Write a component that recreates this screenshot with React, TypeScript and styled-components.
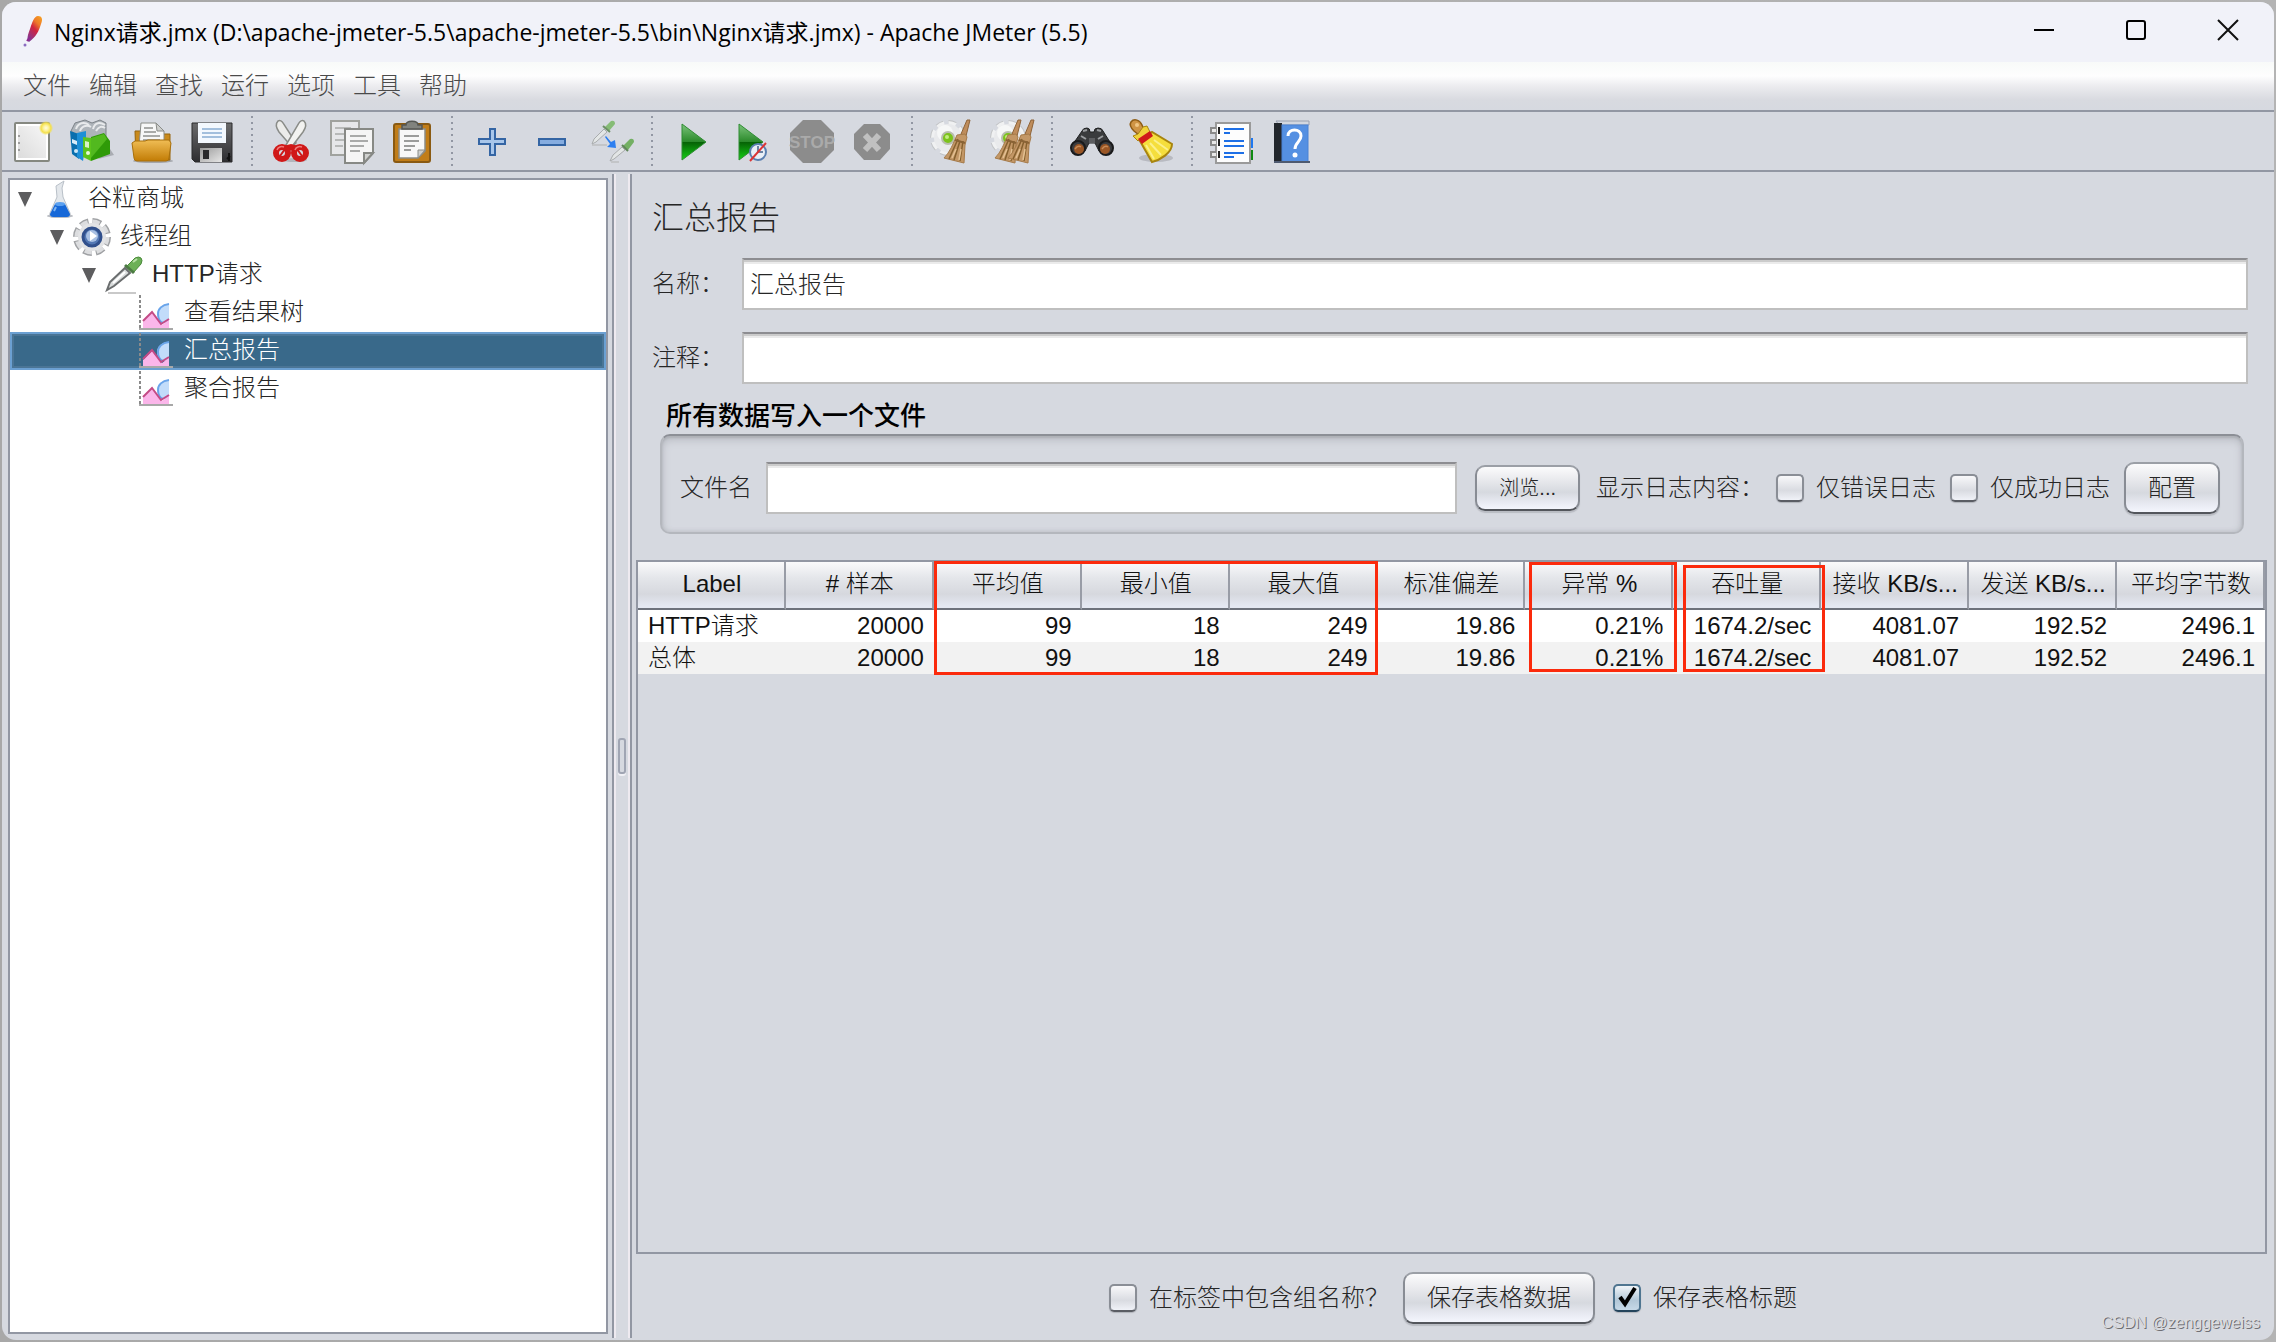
import React, { useId, useState } from "react";
import styled, { createGlobalStyle, css } from "styled-components";

const C = {
  panel: "#d6d9e0",
  line: "#9297a3",
  dark: "#6d727c",
  text: "#262626",
};

const UI = `"Liberation Sans", "Noto Sans CJK SC", sans-serif`;

const Global = createGlobalStyle`
  *, *::before, *::after { box-sizing: border-box; }
  html, body, #root { height: 100%; }
  body { margin: 0; background: #acacac; }
  button, input { font: inherit; color: inherit; margin: 0; }
  svg { display: block; overflow: visible; }
`;

const Desktop = styled.div`
  height: 100%;
  padding: 2px;
  background: linear-gradient(90deg, #a8a8a8, #b4b4b4);
  font-family: ${UI};
  font-size: 24px;
  font-weight: 300;
  line-height: 32px;
  color: ${C.text};
`;

const Window = styled.div`
  position: relative;
  height: 100%;
  display: flex;
  flex-direction: column;
  overflow: hidden;
  border-radius: 14px;
  background: ${C.panel};
`;

/* ---------- title bar ---------- */

const TitleBar = styled.header`
  flex: none;
  height: 60px;
  display: flex;
  align-items: center;
  padding: 0 0 0 16px;
  background: #f1f2f9;
`;

const TitleText = styled.h1`
  flex: 1;
  margin: 0 0 0 8px;
  font-family: "Open Sans", "Noto Sans CJK SC", sans-serif;
  font-size: 23px;
  font-weight: 400;
  color: #000;
  white-space: nowrap;
`;

const WindowButton = styled.button`
  width: 92px;
  height: 60px;
  padding: 0 0 4px;
  display: grid;
  place-items: center;
  border: 0;
  background: none;
`;

/* ---------- menu ---------- */

const MenuBar = styled.nav`
  flex: none;
  height: 50px;
  display: flex;
  align-items: center;
  padding: 0 12px;
  border-bottom: 2px solid ${C.line};
  background: linear-gradient(#f8faf9 0, #fefefe 14px, #ececef 24px, #d8dae0 38px, ${C.panel} 48px);
`;

const MenuItem = styled.button`
  padding: 0 9px;
  border: 0;
  background: none;
  color: #4a4a4a;
`;

/* ---------- toolbar ---------- */

const ToolBar = styled.div`
  flex: none;
  height: 60px;
  display: flex;
  align-items: center;
  border-bottom: 2px solid ${C.line};
`;

const ToolButton = styled.button`
  width: 60px;
  height: 58px;
  padding: 0;
  display: grid;
  place-items: center;
  border: 0;
  background: none;
`;

const ToolSeparator = styled.span`
  width: 20px;
  height: 50px;
  background: repeating-linear-gradient(${C.line} 0 2px, transparent 2px 6px) center / 2px 100% no-repeat;
`;

/* ---------- body ---------- */

const Body = styled.div`
  flex: 1;
  min-height: 0;
  display: flex;
`;

const TreePane = styled.aside`
  flex: 0 0 610px;
  padding: 6px 4px 6px 6px;
  display: flex;
`;

const Tree = styled.ul`
  flex: 1;
  margin: 0;
  padding: 0;
  list-style: none;
  border: 2px solid ${C.line};
  background: #fff;
`;

const TreeRow = styled.li<{ $level: number; $selected?: boolean }>`
  height: 38px;
  display: flex;
  align-items: center;
  padding-left: ${(p) => 4 + p.$level * 32}px;
  ${(p) =>
    p.$selected &&
    css`
      background: #39698a;
      color: #fff;
      box-shadow: inset 0 0 0 2px #6ba0d2, inset 0 0 0 4px #4a7596;
    `}
`;

const Twisty = styled.span`
  width: 22px;
  display: grid;
  place-items: center;
`;

const TreeIcon = styled.span`
  width: 48px;
  height: 38px;
  display: grid;
  place-items: center;
`;

const TreeLabel = styled.span`
  padding: 0 0 2px 4px;
`;

const Divider = styled.div`
  flex: 0 0 20px;
  margin: 2px 0;
  display: grid;
  place-items: center;
  border: solid ${C.line};
  border-width: 0 2px;
  box-shadow: inset 2px 0 #eeeaf0, inset -2px 0 #eeeaf0;
`;

const Grip = styled.span`
  width: 8px;
  height: 36px;
  border: 2px solid #a0a5b3;
  border-radius: 3px;
  background: ${C.panel};
  box-shadow: 0 2px #f0f0f5;
`;

const Main = styled.main`
  flex: 1;
  min-width: 0;
  display: flex;
  flex-direction: column;
  padding-top: 26px;
`;

const Form = styled.section`
  display: flex;
  flex-direction: column;
  gap: 22px;
  padding: 0 26px 0 20px;
`;

const PageTitle = styled.h2`
  margin: 0 0 -2px;
  font-size: 32px;
  line-height: 40px;
  font-weight: 300;
`;

const FieldRow = styled.div`
  display: grid;
  grid-template-columns: 90px 1fr;
  align-items: center;
`;

const TextBox = styled.input`
  width: 100%;
  min-width: 0;
  height: 52px;
  padding: 0 6px 4px;
  border: 2px solid #bfbfbf;
  border-top-color: #8d8d91;
  border-radius: 0;
  outline: 0;
  background: #fff;
  box-shadow: inset 0 2px #cbcbcb, inset 0 4px #ebebeb;
`;

const GroupTitle = styled.h3`
  margin: 16px 0 2px 34px;
  font-size: 26px;
  line-height: 32px;
  font-weight: 500;
  color: #000;
`;

const GroupBox = styled.section`
  margin: 0 30px 26px 28px;
  height: 100px;
  display: flex;
  align-items: center;
  border: 2px solid #b4b7bd;
  border-top-color: #8c8f96;
  border-radius: 10px;
  padding: 26px 22px 18px 18px;
  box-shadow: inset 0 2px 2px #aeb1b7, inset 0 4px 8px #b9bcc3, inset 0 -1px 4px #c2c5cc;
`;

const FileLabel = styled.label`
  margin-right: 14px;
  white-space: nowrap;
`;

const FileField = styled.div`
  flex: 1;
  min-width: 0;
  margin-right: 18px;
`;

const PushButton = styled.button<{ $small?: boolean }>`
  flex: none;
  height: ${(p) => (p.$small ? 46 : 52)}px;
  padding: 0 22px;
  font-size: ${(p) => (p.$small ? 20 : 24)}px;
  white-space: nowrap;
  border: 2px solid #888c94;
  border-top-color: #9b9fa6;
  border-bottom-color: #53565c;
  border-radius: 10px;
  background: linear-gradient(#fbfbfc 0%, #e6e7eb 35%, #d6d9df 60%, #e9ebf3 85%, #f4f6fd 100%);
  box-shadow: 0 2px 1px #b9bcc3;
`;

const LogLabel = styled.span`
  margin: 0 12px 0 16px;
  white-space: nowrap;
`;

const CheckField = styled.label`
  display: flex;
  align-items: center;
  gap: 12px;
  margin-right: 14px;
  white-space: nowrap;
`;

const BoxWrap = styled.span`
  position: relative;
  width: 28px;
  height: 28px;
`;

const Box = styled.input`
  appearance: none;
  display: block;
  width: 28px;
  height: 28px;
  border: 2px solid #8a8e96;
  border-bottom-color: #5a5d64;
  border-radius: 5px;
  background: linear-gradient(#f8f8fa, #d9dbe1 60%, #f0f2f8);
  box-shadow: 0 1px 1px #b0b3ba;
  &:checked {
    border-color: #4f7590;
    border-bottom-color: #24445c;
    background: linear-gradient(#f0f4f8, #b3c8d8 60%, #c6d9e8);
  }
`;

const Tick = styled.svg`
  position: absolute;
  left: 4px;
  top: 0;
  pointer-events: none;
`;

/* ---------- table ---------- */

const TableFrame = styled.section`
  position: relative;
  flex: 1;
  min-height: 0;
  margin: 0 7px 0 4px;
  border: 2px solid ${C.line};
`;

const Table = styled.table`
  width: 100%;
  table-layout: fixed;
  border-collapse: separate;
  border-spacing: 0;
  color: #111;
`;

const Th = styled.th`
  height: 48px;
  padding: 0 0 2px 2px;
  font-weight: 300;
  text-align: center;
  white-space: nowrap;
  border-bottom: 2px solid ${C.dark};
  border-right: 2px solid #989ca6;
  background: linear-gradient(#fafafb 0, #e4e6ea 16px, #d6d8de 32px, #e4e8f2 44px);
`;

const Tr = styled.tr<{ $alt: boolean }>`
  background: ${(p) => (p.$alt ? "#f2f2f2" : "#fff")};
`;

const Td = styled.td<{ $num?: boolean }>`
  height: 32px;
  padding: 0 10px;
  line-height: 32px;
  white-space: nowrap;
  text-align: ${(p) => (p.$num ? "right" : "left")};
`;

const Highlight = styled.span<{ $from: number; $span: number; $inset: number; $top: number; $height: number }>`
  position: absolute;
  top: ${(p) => p.$top}px;
  left: calc(100% * ${(p) => p.$from} / 11 + ${(p) => p.$inset}px);
  width: calc(100% * ${(p) => p.$span} / 11 - ${(p) => Math.max(0, p.$inset - 4)}px);
  height: ${(p) => p.$height}px;
  border: 3px solid #fb2a0c;
  pointer-events: none;
`;

const Footer = styled.footer`
  display: flex;
  justify-content: center;
  align-items: center;
  padding: 18px 0 16px;
`;

const SaveHeader = styled.div`
  margin-left: 18px;
  margin-right: -14px;
`;

const Watermark = styled.span`
  position: absolute;
  right: 14px;
  bottom: 6px;
  font-size: 16px;
  line-height: 22px;
  font-weight: 400;
  color: #dcdcdf;
  text-shadow: 1px 1px #6f6f74;
`;

/* ---------- drawings ---------- */

const Feather = () => (
  <svg width="28" height="34" viewBox="0 0 28 34">
    <defs>
      <linearGradient id="feather" x1="0.8" y1="0" x2="0.2" y2="1">
        <stop offset="0" stopColor="#f59a23" />
        <stop offset="0.25" stopColor="#ee7a2a" />
        <stop offset="0.5" stopColor="#d2243f" />
        <stop offset="1" stopColor="#7d3a98" />
      </linearGradient>
    </defs>
    <path d="M20 1c4 0 5 3 3 8-2 7-5 13-12 18-3-1-1-8 1-13 2-6 4-13 8-13z" fill="url(#feather)" />
    <path d="M12 22l-3 4" stroke="#8d2a8f" strokeWidth="2" fill="none" />
    <circle cx="7" cy="30" r="1.500" fill="#8a6cc0" />
  </svg>
);

const Svg = ({ children }: { children: React.ReactNode }) => (
  <svg width="44" height="44" viewBox="0 0 44 44" aria-hidden="true">
    {children}
  </svg>
);

const NewIcon = () => (
  <Svg>
    <defs>
      <linearGradient id="paper" x1="0" y1="1" x2="1" y2="0">
        <stop offset="0" stopColor="#dcdcdc" />
        <stop offset="1" stopColor="#f6f6f6" />
      </linearGradient>
      <radialGradient id="glow">
        <stop offset="0" stopColor="#fffbe0" />
        <stop offset="0.35" stopColor="#fdf3a0" />
        <stop offset="0.7" stopColor="#f4e04c" />
        <stop offset="1" stopColor="#f4e04c" stopOpacity="0.1" />
      </radialGradient>
    </defs>
    <rect x="5" y="4" width="34" height="38" rx="1" fill="#fff" stroke="#858880" strokeWidth="2" />
    <rect x="8" y="7" width="28" height="32" fill="url(#paper)" />
    <circle cx="9" cy="17" r="1" fill="#888" />
    <circle cx="9" cy="24" r="1" fill="#888" />
    <circle cx="9" cy="31" r="1" fill="#888" />
    <circle cx="36" cy="9" r="7" fill="url(#glow)" />
  </Svg>
);

const TemplatesIcon = () => (
  <Svg>
    <path d="M28 40l16-4-4-6z" fill="#8b8d92" opacity="0.6" />
    <path d="M1 12l4-8 10-3 7 3 8-3 6 3v14l-18 6z" fill="#aeb4ba" stroke="#7c8288" />
    <path d="M6 10c2-6 8-8 13-4M10 12c2-6 8-6 11-4M23 10c2-7 7-7 12-4M26 12c3-5 6-5 9-3" stroke="#e8eaec" strokeWidth="2" fill="none" />
    <path d="M0 12l9 3v25l-7-5z" fill="#0a6fae" />
    <path d="M7 14l9-2v12l-3 18-6-4z" fill="#1d8fd6" />
    <path d="M2 20l5 2v4l-5-2z" fill="#d8ecf8" />
    <path d="M13 18l8 1v23l-8-4z" fill="#5cc41c" />
    <path d="M21 18l13-4 6 8v13l-19 7z" fill="#2f9a08" />
    <path d="M21 19l13-4 3 5-16 19z" fill="#52b91f" />
    <path d="M15 22l4 1v6l-4-1z" fill="#d9f2c6" />
    <circle cx="18" cy="34" r="2" fill="#e7f7d9" />
    <circle cx="6" cy="32" r="2" fill="#cfe8f7" />
  </Svg>
);

const OpenIcon = () => (
  <Svg>
    <defs>
      <linearGradient id="folder" x1="0" y1="0" x2="0" y2="1">
        <stop offset="0" stopColor="#f0bd55" />
        <stop offset="1" stopColor="#c27c05" />
      </linearGradient>
    </defs>
    <ellipse cx="23" cy="42" rx="20" ry="2" fill="#8f9094" opacity="0.7" />
    <path d="M5 12h7l2 3h26v26H6z" fill="#c98a1c" stroke="#96640c" />
    <path d="M11 4h15l8 8v15H9z" fill="#f7f7f7" stroke="#8a8c88" />
    <path d="M26 4l8 8h-7z" fill="#cfd0ce" stroke="#8a8c88" />
    <path d="M14 9h9M14 13h12M13 17h17M13 21h17" stroke="#a9aaa8" strokeWidth="2" />
    <path d="M2 24l3-2h10l3-1h21l2 3-2 15q0 3-3 3H7q-3 0-3-3z" fill="url(#folder)" stroke="#a9700c" />
  </Svg>
);

const SaveIcon = () => (
  <Svg>
    <defs>
      <linearGradient id="metal" x1="0" y1="0" x2="1" y2="1">
        <stop offset="0" stopColor="#9a9a9a" />
        <stop offset="1" stopColor="#e6e6e6" />
      </linearGradient>
      <linearGradient id="shell" x1="0" y1="0" x2="0" y2="1">
        <stop offset="0" stopColor="#6a6a6c" />
        <stop offset="1" stopColor="#2d2d30" />
      </linearGradient>
    </defs>
    <path d="M2 4h40v39H5l-3-3z" fill="url(#shell)" stroke="#2b2b2d" />
    <rect x="8" y="4" width="28" height="20" fill="#f3f8fe" />
    <path d="M12 10h20M12 14h20M12 18h20" stroke="#a3bfdd" strokeWidth="2" />
    <rect x="10" y="29" width="22" height="14" fill="url(#metal)" />
    <rect x="13" y="31" width="6" height="9" fill="#2b2b2d" />
    <path d="M37 40l3-3M39 34v8" stroke="#111" strokeWidth="2" />
  </Svg>
);

const CutIcon = () => (
  <Svg>
    <ellipse cx="25" cy="41" rx="12" ry="2" fill="#9a9ca2" opacity="0.6" />
    <path d="M8 2c-3 3-1 8 1 11l13 15 4-4L13 4c-1-2-3-3-5-2z" fill="#ececea" stroke="#8a8c88" strokeWidth="1.500" />
    <path d="M34 2c3 3 1 8-1 11L20 30l-4-4L29 4c1-2 3-3 5-2z" fill="#f2f2f0" stroke="#8a8c88" strokeWidth="1.500" />
    <path d="M13 27l8-2 8 2-3 8-5-4-5 4z" fill="#d01818" />
    <ellipse cx="12" cy="34" rx="6" ry="6" fill="#d6d9e0" stroke="#d01818" strokeWidth="6" />
    <ellipse cx="30" cy="34" rx="6" ry="6" fill="#d6d9e0" stroke="#d01818" strokeWidth="6" />
    <path d="M10 37l5-7M32 37l-5-7" stroke="#d01818" strokeWidth="2" />
    <path d="M7 31c1-3 4-4 7-3M25 31c1-3 4-4 7-3" stroke="#f07a7a" strokeWidth="1.500" fill="none" />
  </Svg>
);

const CopyIcon = () => (
  <Svg>
    <path d="M1 2h28v34H1z" fill="#e6e7e9" stroke="#a0a29e" strokeWidth="2" />
    <path d="M5 9h16M5 15h10M5 21h9M5 27h8" stroke="#b7b9b8" strokeWidth="2" />
    <path d="M15 10h28v24l-9 10H15z" fill="#f5f5f5" stroke="#878985" strokeWidth="2" />
    <path d="M43 34h-9v10z" fill="#d0d1cf" stroke="#878985" strokeWidth="2" />
    <path d="M20 17h16M20 22h18M20 27h14M20 32h10" stroke="#a9aaa9" strokeWidth="2" />
  </Svg>
);

const PasteIcon = () => (
  <Svg>
    <rect x="4" y="5" width="36" height="38" rx="2" fill="#c17d18" stroke="#8a5a12" strokeWidth="2" />
    <path d="M9 10h26v22l-7 7H9z" fill="#f8f8f8" stroke="#8a8c88" strokeWidth="1.500" />
    <path d="M35 31h-7v8z" fill="#cfd0ce" stroke="#8a8c88" />
    <path d="M14 17h15M14 22h15M14 27h11M14 31h7" stroke="#9b9c9b" strokeWidth="2" />
    <path d="M12 10V6h4c0-5 12-5 12 0h4v4z" fill="#81837e" stroke="#555753" strokeWidth="1.500" />
  </Svg>
);

const PlusIcon = () => (
  <Svg>
    <path d="M20 10h5v10h10v5H25v11h-5V25H9v-5h11z" fill="#a8c6ea" stroke="#3465a4" strokeWidth="2" />
  </Svg>
);

const MinusIcon = () => (
  <Svg>
    <path d="M9 20h26v6H9z" fill="#86ade0" stroke="#3465a4" strokeWidth="2" />
  </Svg>
);

const ToggleIcon = () => (
  <Svg>
    <path d="M2 26h15M21 43h8" stroke="#c3c5c8" strokeWidth="2" />
    <path d="M2 25l2-5L14 10l3 3L6 23z" fill="#e3e6e6" stroke="#a9acad" />
    <path d="M14 9l7-7q4-1 4 3l-6 7z" fill="#86bc76" />
    <path d="M13 7l7 6" stroke="#6d8f66" strokeWidth="2" />
    <path d="M20 42l3-6 9-8 3 3-11 9z" fill="#e3e6e6" stroke="#a9acad" />
    <path d="M33 27l7-7q4-1 4 3l-6 8z" fill="#74b064" />
    <path d="M32 26l6 6" stroke="#5f8558" strokeWidth="2" />
    <path d="M16 17l5 6 4-2 1 8-9-1 3-3-5-7z" fill="#2d7ff0" />
  </Svg>
);

const StartShape = () => (
  <>
    <defs>
      <linearGradient id="go" x1="0" y1="0" x2="0" y2="1">
        <stop offset="0" stopColor="#7cc47c" />
        <stop offset="0.49" stopColor="#2b8a2b" />
        <stop offset="0.5" stopColor="#066006" />
        <stop offset="1" stopColor="#14d214" />
      </linearGradient>
    </defs>
    <path d="M0 0l24 18L0 36z" fill="url(#go)" stroke="#2f8c33" strokeWidth="1" />
  </>
);

const StartIcon = () => (
  <Svg>
    <g transform="translate(12 5)">
      <StartShape />
    </g>
  </Svg>
);

const StartNoPauseIcon = () => (
  <Svg>
    <g transform="translate(9 5)">
      <StartShape />
    </g>
    <circle cx="28" cy="33" r="8" fill="#e9eff6" stroke="#5a7fb0" strokeWidth="2" />
    <path d="M28 27v6h5" stroke="#6b83a4" strokeWidth="2" fill="none" />
    <path d="M20 42L36 24" stroke="#dc3434" strokeWidth="2" />
  </Svg>
);

const StopIcon = () => (
  <Svg>
    <path d="M13 1h18l13 13v17L31 44H13L0 31V14z" fill="#8c8c8c" />
    <text x="22" y="29" textAnchor="middle" fontFamily="Liberation Sans Narrow, Liberation Sans" fontWeight="700" fontSize="17" fill="#aaaaaa">
      STOP
    </text>
  </Svg>
);

const ShutdownIcon = () => (
  <Svg>
    <path d="M14 5h16l10 10v15L30 41H14L4 30V15z" fill="#8c8c8c" />
    <path d="M15 16l14 15M29 16L15 31" stroke="#c0c0c0" strokeWidth="6" />
  </Svg>
);

const Gear = () => (
  <g>
    <circle cx="18" cy="19" r="15" fill="none" stroke="#c2c4c6" strokeWidth="6" strokeDasharray="7 4.780" />
    <circle cx="18" cy="19" r="14" fill="none" stroke="#f0f1f2" strokeWidth="6" strokeDasharray="7 4" />
    <circle cx="18" cy="19" r="14" fill="#e9eaec" />
    <circle cx="15" cy="14" r="8" fill="#f6f7f7" />
    <circle cx="18" cy="19" r="6" fill="#7cc31c" stroke="#b9bdae" strokeWidth="2" />
    <circle cx="17" cy="18" r="2" fill="#c3ec7f" />
  </g>
);

const Broom = ({ x }: { x: number }) => (
  <g transform={`translate(${x} 0)`}>
    <path d="M24 1h3l-4 16-5-2z" fill="#bf8d5c" stroke="#8d6338" />
    <path d="M14 16l8-1 2 3-2 8-1 18-20-5c6-6 9-14 13-23z" fill="#c39766" stroke="#a57a49" />
    <path d="M15 20L6 40M17 22l-6 19M20 22l-3 20" stroke="#86612f" strokeWidth="1.500" />
    <path d="M12 21l10 3" stroke="#8a6335" strokeWidth="2" />
    <path d="M13 30l-4 9M18 30l-2 11" stroke="#e3c092" strokeWidth="1.500" />
  </g>
);

const ClearIcon = () => (
  <Svg>
    <Gear />
    <Broom x={13} />
  </Svg>
);

const ClearAllIcon = () => (
  <Svg>
    <Gear />
    <Broom x={4} />
    <Broom x={17} />
  </Svg>
);

const SearchIcon = () => (
  <Svg>
    <path d="M12 12q1-3 5-3 3 0 3 4h4q0-4 4-4 4 0 5 3l10 16-14 4-4-8h-6l-4 8-14-4z" fill="#3a3b3d" stroke="#1f2021" />
    <path d="M13 12l4-1M27 11l4 1M11 17l5 3M28 20l5-3" stroke="#9a9c9f" strokeWidth="2" />
    <path d="M19 19h6v5h-6z" fill="#5c5d60" />
    <circle cx="8" cy="29" r="7" fill="#3b3c3f" stroke="#1a1a1b" strokeWidth="2" />
    <circle cx="36" cy="29" r="7" fill="#3b3c3f" stroke="#1a1a1b" strokeWidth="2" />
    <circle cx="9" cy="30" r="5" fill="#9a5625" />
    <circle cx="35" cy="30" r="5" fill="#9a5625" />
    <path d="M5 30q3-4 6-2M32 30q3-4 6-2" stroke="#c98a55" strokeWidth="1.500" fill="none" />
  </Svg>
);

const ResetIcon = () => (
  <Svg>
    <ellipse cx="26" cy="39" rx="17" ry="4" fill="#9a9ca2" opacity="0.5" />
    <path d="M1 3c3-4 9-2 11 3l2 5-5 5-5-4C1 9-1 6 1 3z" fill="#cf9445" stroke="#8f5d16" strokeWidth="1.500" />
    <circle cx="7" cy="6" r="2" fill="#f0c684" />
    <path d="M3 17l5-2 5-7 4-1 3 6-12 9z" fill="#f0d23a" stroke="#a8850f" />
    <path d="M10 22l12-9 20 12c0 9-12 16-20 18z" fill="#f5de3c" stroke="#a8850f" strokeWidth="2" />
    <path d="M8 20l12-8 3 5-11 8z" fill="#d01a1a" />
    <path d="M16 26l8 14M20 24l11 12M24 21l14 10" stroke="#fbf08a" strokeWidth="2" />
  </Svg>
);

const FunctionIcon = () => (
  <Svg>
    <rect x="38" y="19" width="5" height="10" fill="#1f78f0" />
    <rect x="38" y="31" width="5" height="10" fill="#0f8a12" />
    <path d="M6 4h34v40H6z" fill="#fdfdfd" stroke="#9a9a9a" strokeWidth="2" />
    <path d="M14 10h20M14 14h6M14 22h20M14 27h20M14 34h20M14 38h10" stroke="#1d6fe6" strokeWidth="2" />
    <path d="M6 9H1v5h5M6 21H1v5h5M6 33H1v5h5" fill="#e9e9e9" stroke="#8a8a8a" strokeWidth="2" />
    <path d="M9 8v7M9 20v7M9 32v7" stroke="#222" strokeWidth="2" />
  </Svg>
);

const HelpIcon = () => (
  <Svg>
    <path d="M6 2h33v4H9z" fill="#d3d7df" stroke="#9aa1b0" />
    <path d="M4 4h8v40H4z" fill="#22262c" />
    <rect x="12" y="6" width="26" height="37" fill="#5590e2" stroke="#4a82d4" />
    <path d="M4 43h36" stroke="#4e5a70" strokeWidth="2" />
    <path d="M18 17c0-8 13-8 13 0 0 6-6 6-6 13" stroke="#fff" strokeWidth="3" fill="none" />
    <circle cx="25" cy="36" r="2.500" fill="#fff" />
  </Svg>
);

const ArrowDown = () => (
  <svg width="14" height="15" viewBox="0 0 14 15">
    <path d="M0 0h14L7 15z" fill="#5d5d5f" />
  </svg>
);

const FlaskIcon = () => (
  <svg width="28" height="38" viewBox="0 0 28 38">
    <ellipse cx="14" cy="36" rx="13" ry="2" fill="#b9bcc2" />
    <path d="M10 6l8-5-2 7 1 9 7 16q1 4-3 4H7q-4 0-3-4l7-16z" fill="#e3e7eb" stroke="#b9c0c8" />
    <path d="M9 24h10l5 10q0 3-3 3H7q-3 0-3-3z" fill="#1668d8" />
    <ellipse cx="14" cy="24" rx="5" ry="2" fill="#5aa0f0" />
    <path d="M8 31l2-4" stroke="#7fb6f4" strokeWidth="2" />
  </svg>
);

const ThreadIcon = () => (
  <svg width="38" height="38" viewBox="0 0 38 38">
    <circle cx="19" cy="19" r="15" fill="none" stroke="#9fa1a4" strokeWidth="8" strokeDasharray="8 3.781" />
    <circle cx="19" cy="19" r="15" fill="none" stroke="#dcdddf" strokeWidth="5" strokeDasharray="7 4.781" />
    <circle cx="19" cy="19" r="14" fill="#e2e3e5" />
    <circle cx="19" cy="19" r="9" fill="#5378b4" stroke="#31508c" strokeWidth="3" />
    <circle cx="19" cy="18" r="6" fill="#a9c0e2" />
    <path d="M17 13l7 5-7 5z" fill="#fff" />
  </svg>
);

const SamplerIcon = () => (
  <svg width="38" height="38" viewBox="0 0 38 38">
    <path d="M3 37h28" stroke="#c9c9c9" strokeWidth="2" />
    <path d="M2 34l3-8L20 12l5 5L9 30z" fill="#d9dcdc" stroke="#6a6d6e" strokeWidth="2" />
    <path d="M8 27l12-11" stroke="#fff" strokeWidth="2" />
    <path d="M22 10l8-8q4-2 6 0t0 6l-8 9z" fill="#6cb057" stroke="#4a8a3a" />
    <path d="M20 9l9 8" stroke="#4d7a44" strokeWidth="3" />
    <path d="M28 6l4-3" stroke="#b9e0a8" strokeWidth="2" />
  </svg>
);

const ListenerIcon = () => (
  <svg width="34" height="36" viewBox="0 0 34 36">
    <path d="M1 0v34" stroke="#8a8a8a" strokeWidth="2" strokeDasharray="3 2" />
    <path d="M0 34h34" stroke="#a8a8a8" strokeWidth="2" />
    <path d="M30 9v20c-6 0-12-4-12-10S24 9 30 9z" fill="#c2dcfa" />
    <path d="M30 9c-7 1-11 5-11 10 0 4 2 8 5 9" stroke="#69a4ea" strokeWidth="2" fill="none" />
    <path d="M4 27l9-9 10 12 7-5v8H4z" fill="#fbb6ea" />
    <path d="M4 26l9-9 9 12 8-5" stroke="#c44a86" strokeWidth="2" fill="none" />
  </svg>
);

/* ---------- data ---------- */

const menus = ["文件", "编辑", "查找", "运行", "选项", "工具", "帮助"];

const tools: { name: string; Icon: () => React.ReactElement }[][] = [
  [
    { name: "新建", Icon: NewIcon },
    { name: "模板", Icon: TemplatesIcon },
    { name: "打开", Icon: OpenIcon },
    { name: "保存", Icon: SaveIcon },
  ],
  [
    { name: "剪切", Icon: CutIcon },
    { name: "复制", Icon: CopyIcon },
    { name: "粘贴", Icon: PasteIcon },
  ],
  [
    { name: "展开", Icon: PlusIcon },
    { name: "折叠", Icon: MinusIcon },
    { name: "切换", Icon: ToggleIcon },
  ],
  [
    { name: "启动", Icon: StartIcon },
    { name: "不停顿启动", Icon: StartNoPauseIcon },
    { name: "停止", Icon: StopIcon },
    { name: "关闭", Icon: ShutdownIcon },
  ],
  [
    { name: "清除", Icon: ClearIcon },
    { name: "清除全部", Icon: ClearAllIcon },
  ],
  [
    { name: "搜索", Icon: SearchIcon },
    { name: "重置搜索", Icon: ResetIcon },
  ],
  [
    { name: "函数助手", Icon: FunctionIcon },
    { name: "帮助", Icon: HelpIcon },
  ],
];

const nodes = [
  { label: "谷粒商城", level: 0, open: true, Icon: FlaskIcon },
  { label: "线程组", level: 1, open: true, Icon: ThreadIcon },
  { label: "HTTP请求", level: 2, open: true, Icon: SamplerIcon },
  { label: "查看结果树", level: 3, open: false, Icon: ListenerIcon },
  { label: "汇总报告", level: 3, open: false, Icon: ListenerIcon },
  { label: "聚合报告", level: 3, open: false, Icon: ListenerIcon },
];

const columns = ["Label", "# 样本", "平均值", "最小值", "最大值", "标准偏差", "异常 %", "吞吐量", "接收 KB/s...", "发送 KB/s...", "平均字节数"];

const values = ["20000", "99", "18", "249", "19.86", "0.21%", "1674.2/sec", "4081.07", "192.52", "2496.1"];
const rows = [
  ["HTTP请求", ...values],
  ["总体", ...values],
];

const Check = ({ label, initial = false }: { label: string; initial?: boolean }) => {
  const id = useId();
  const [on, setOn] = useState(initial);
  return (
    <CheckField htmlFor={id}>
      <BoxWrap>
        <Box id={id} type="checkbox" checked={on} onChange={(e) => setOn(e.target.checked)} />
        {on && (
          <Tick width="22" height="24" viewBox="0 0 22 24">
            <path d="M3 13l5 7L18 4" fill="none" stroke="#000" strokeWidth="4" />
          </Tick>
        )}
      </BoxWrap>
      {label}
    </CheckField>
  );
};

export default function App() {
  return (
    <Desktop>
      <Global />
      <Window>
        <TitleBar>
          <Feather />
          <TitleText>Nginx请求.jmx (D:\apache-jmeter-5.5\apache-jmeter-5.5\bin\Nginx请求.jmx) - Apache JMeter (5.5)</TitleText>
          <WindowButton aria-label="最小化">
            <svg width="20" height="20" viewBox="0 0 20 20">
              <path d="M0 10h20" stroke="#000" strokeWidth="2" />
            </svg>
          </WindowButton>
          <WindowButton aria-label="最大化">
            <svg width="20" height="20" viewBox="0 0 20 20">
              <rect x="1" y="1" width="18" height="18" rx="2" fill="none" stroke="#000" strokeWidth="2" />
            </svg>
          </WindowButton>
          <WindowButton aria-label="关闭窗口">
            <svg width="20" height="20" viewBox="0 0 20 20">
              <path d="M0 0l20 20M20 0L0 20" stroke="#111" strokeWidth="2" />
            </svg>
          </WindowButton>
        </TitleBar>

        <MenuBar>
          {menus.map((m) => (
            <MenuItem key={m}>{m}</MenuItem>
          ))}
        </MenuBar>

        <ToolBar>
          {tools.map((group, i) => (
            <React.Fragment key={i}>
              {i > 0 && <ToolSeparator />}
              {group.map(({ name, Icon }) => (
                <ToolButton key={name} aria-label={name}>
                  <Icon />
                </ToolButton>
              ))}
            </React.Fragment>
          ))}
        </ToolBar>

        <Body>
          <TreePane>
            <Tree>
              {nodes.map(({ label, level, open, Icon }) => (
                <TreeRow key={label} $level={level} $selected={label === "汇总报告"}>
                  <Twisty>{open && <ArrowDown />}</Twisty>
                  <TreeIcon>
                    <Icon />
                  </TreeIcon>
                  <TreeLabel>{label}</TreeLabel>
                </TreeRow>
              ))}
            </Tree>
          </TreePane>

          <Divider>
            <Grip />
          </Divider>

          <Main>
            <Form>
              <PageTitle>汇总报告</PageTitle>
              <FieldRow>
                <label htmlFor="name">名称：</label>
                <TextBox id="name" defaultValue="汇总报告" />
              </FieldRow>
              <FieldRow>
                <label htmlFor="comment">注释：</label>
                <TextBox id="comment" />
              </FieldRow>
            </Form>

            <GroupTitle>所有数据写入一个文件</GroupTitle>
            <GroupBox>
              <FileLabel htmlFor="file">文件名</FileLabel>
              <FileField>
                <TextBox id="file" />
              </FileField>
              <PushButton $small>浏览...</PushButton>
              <LogLabel>显示日志内容：</LogLabel>
              <Check label="仅错误日志" />
              <Check label="仅成功日志" />
              <PushButton>配置</PushButton>
            </GroupBox>

            <TableFrame>
              <Table>
                <thead>
                  <tr>
                    {columns.map((c) => (
                      <Th key={c} scope="col">
                        {c}
                      </Th>
                    ))}
                  </tr>
                </thead>
                <tbody>
                  {rows.map((row, r) => (
                    <Tr key={row[0]} $alt={r % 2 === 1}>
                      {row.map((cell, i) => (
                        <Td key={columns[i]} $num={i > 0}>
                          {cell}
                        </Td>
                      ))}
                    </Tr>
                  ))}
                </tbody>
              </Table>
              <Highlight $from={2} $span={3} $inset={0} $top={-1} $height={114} />
              <Highlight $from={6} $span={1} $inset={4} $top={0} $height={110} />
              <Highlight $from={7} $span={1} $inset={10} $top={3} $height={107} />
            </TableFrame>

            <Footer>
              <Check label="在标签中包含组名称？" />
              <PushButton>保存表格数据</PushButton>
              <SaveHeader>
                <Check label="保存表格标题" initial />
              </SaveHeader>
            </Footer>
          </Main>
        </Body>
        <Watermark>CSDN @zenggeweiss</Watermark>
      </Window>
    </Desktop>
  );
}
